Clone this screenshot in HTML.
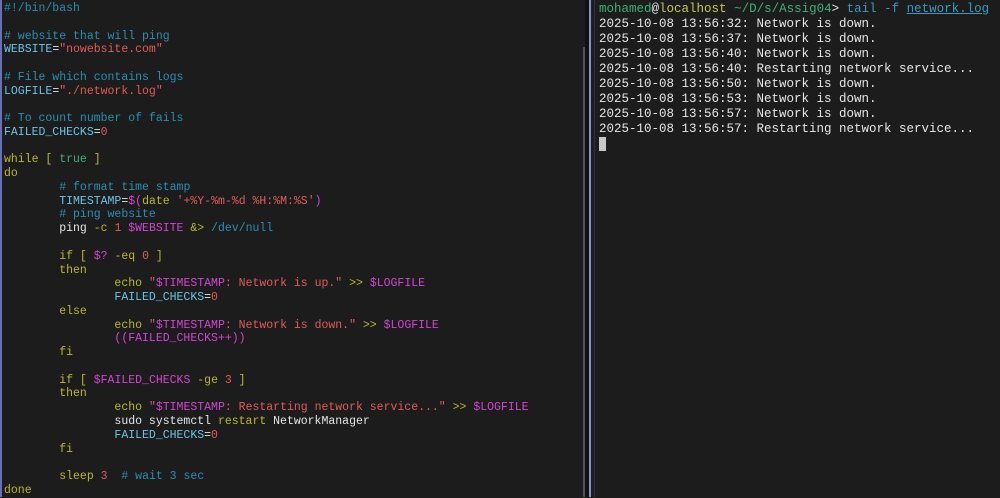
<!DOCTYPE html><html><head><style>
body{margin:0;width:1000px;height:497px;background:#1c1c1c;overflow:hidden;position:relative}
.l{position:absolute;left:4px;top:2px;font:11.5px/13.77px "Liberation Mono",monospace;color:#e6e6e6;white-space:pre}
.r{position:absolute;left:599px;top:2px;font:12.5px/15px "Liberation Mono",monospace;color:#e6e6e6;white-space:pre}
.c{color:#2a8fb3}.s{color:#e05c5c}.k{color:#b9b92c}.v{color:#d246d2}.i{color:#6cc4e4}.g{color:#3fb07a}
</style></head><body>
<div style="position:absolute;left:0;top:0;width:2px;height:497px;background:#6870b0"></div>
<div style="position:absolute;left:583px;top:47px;width:2px;height:450px;background:#555"></div>
<div style="position:absolute;left:585px;top:0;width:4px;height:497px;background:#111"></div>
<div style="position:absolute;left:589px;top:0;width:2px;height:497px;background:#8890d0"></div>
<div style="position:absolute;left:594px;top:0;width:1px;height:497px;background:#333"></div>
<div class="l"><span class="c">#!/bin/bash</span>

<span class="c"># website that will ping</span>
<span class="i">WEBSITE</span>=<span class="s">"nowebsite.com"</span>

<span class="c"># File which contains logs</span>
<span class="i">LOGFILE</span>=<span class="s">"./network.log"</span>

<span class="c"># To count number of fails</span>
<span class="i">FAILED_CHECKS</span>=<span class="s">0</span>

<span class="k">while [ </span><span class="g">true</span><span class="k"> ]</span>
<span class="k">do</span>
        <span class="c"># format time stamp</span>
        <span class="i">TIMESTAMP</span>=<span class="v">$(</span><span class="k">date</span> <span class="s">'+%Y-%m-%d %H:%M:%S'</span><span class="v">)</span>
        <span class="c"># ping website</span>
        ping <span class="k">-c</span> <span class="s">1</span> <span class="v">$WEBSITE</span> <span class="k">&amp;&gt;</span> <span class="c">/dev/null</span>

        <span class="k">if [ </span><span class="v">$?</span><span class="k"> -eq </span><span class="s">0</span><span class="k"> ]</span>
        <span class="k">then</span>
                <span class="k">echo</span> <span class="s">"</span><span class="v">$TIMESTAMP</span><span class="s">: Network is up."</span> <span class="k">&gt;&gt;</span> <span class="v">$LOGFILE</span>
                <span class="i">FAILED_CHECKS</span>=<span class="s">0</span>
        <span class="k">else</span>
                <span class="k">echo</span> <span class="s">"</span><span class="v">$TIMESTAMP</span><span class="s">: Network is down."</span> <span class="k">&gt;&gt;</span> <span class="v">$LOGFILE</span>
                <span class="v">((FAILED_CHECKS++))</span>
        <span class="k">fi</span>

        <span class="k">if [ </span><span class="v">$FAILED_CHECKS</span><span class="k"> -ge </span><span class="s">3</span><span class="k"> ]</span>
        <span class="k">then</span>
                <span class="k">echo</span> <span class="s">"</span><span class="v">$TIMESTAMP</span><span class="s">: Restarting network service..."</span> <span class="k">&gt;&gt;</span> <span class="v">$LOGFILE</span>
                sudo systemctl <span class="k">restart</span> NetworkManager
                <span class="i">FAILED_CHECKS</span>=<span class="s">0</span>
        <span class="k">fi</span>

        <span class="k">sleep</span> <span class="s">3</span>  <span class="c"># wait 3 sec</span>
<span class="k">done</span></div>
<div class="r"><span class="g">mohamed</span>@<span style="color:#c8c850">localhost</span> <span class="g">~/D/s/Assig04</span>&gt; <span style="color:#3a9ac0">tail</span> <span style="color:#3a9ac0">-f</span> <span style="color:#3a9ac0;text-decoration:underline">network.log</span>
2025-10-08 13:56:32: Network is down.
2025-10-08 13:56:37: Network is down.
2025-10-08 13:56:40: Network is down.
2025-10-08 13:56:40: Restarting network service...
2025-10-08 13:56:50: Network is down.
2025-10-08 13:56:53: Network is down.
2025-10-08 13:56:57: Network is down.
2025-10-08 13:56:57: Restarting network service...
</div>
<div style="position:absolute;left:599px;top:137px;width:7px;height:14px;background:#c8c8c8"></div>
</body></html>
